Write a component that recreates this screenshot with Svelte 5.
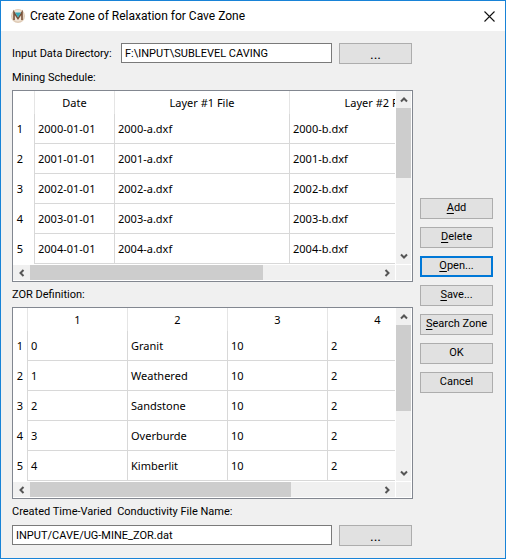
<script>
  let directory = $state('F:\\INPUT\\SUBLEVEL CAVING');
  let outputFile = $state('INPUT/CAVE/UG-MINE_ZOR.dat');

  const tables = [
    {
      label: 'Mining Schedule:',
      kind: 'schedule',
      columns: ['Date', 'Layer #1 File', 'Layer #2 File'],
      rows: [2000, 2001, 2002, 2003, 2004].map((y) => [`${y}-01-01`, `${y}-a.dxf`, `${y}-b.dxf`]),
      thumb: { down: 50, across: 67 },
    },
    {
      label: 'ZOR Definition:',
      kind: 'zor',
      columns: ['1', '2', '3', '4'],
      rows: ['Granit', 'Weathered', 'Sandstone', 'Overburde', 'Kimberlit'].map((name, i) => [String(i), name, '10', '2']),
      thumb: { down: 62, across: 75 },
    },
  ];

  const actions = [
    { key: 'A', rest: 'dd' },
    { key: 'D', rest: 'elete' },
    { key: 'O', rest: 'pen...', focused: true },
    { key: 'S', rest: 'ave...' },
    { key: 'S', rest: 'earch Zone' },
    { key: '', rest: 'OK' },
    { key: '', rest: 'Cancel' },
  ];

  const arrows = {
    up: 'M1 5.5 4 2.5 7 5.5',
    down: 'M1 2.5 4 5.5 7 2.5',
    left: 'M5.5 1 2.5 4 5.5 7',
    right: 'M2.5 1 5.5 4 2.5 7',
  };
</script>

{#snippet arrow(dir)}
  <button class="arrow" type="button" aria-label={`Scroll ${dir}`}>
    <svg viewBox="0 0 8 8" width="8" height="8"><path d={arrows[dir]} fill="none" stroke="#555" stroke-width="2" /></svg>
  </button>
{/snippet}

<main class="window">
  <header class="titlebar">
    <svg class="logo" viewBox="0 0 14 14" width="14" height="14" aria-hidden="true">
      <circle cx="7" cy="7" r="7" fill="#dfcbb6" />
      <circle cx="7" cy="6.6" r="5.8" fill="#efe3d6" />
      <path d="M3 11V3.5L7 9.5 11 3.5V11" fill="none" stroke="#77513a" stroke-width="1.6" />
      <path d="M4 3.6H10L7 8.6Z" fill="#35a9ba" />
    </svg>
    <h1>Create Zone of Relaxation for Cave Zone</h1>
    <button class="close" type="button" aria-label="Close">
      <svg viewBox="0 0 11 11" width="11" height="11"><path d="M.5 .5 10.5 10.5M10.5 .5 .5 10.5" stroke="#111" stroke-width="1.1" /></svg>
    </button>
  </header>

  <div class="content">
    <div class="form">
      <div class="field">
        <label for="directory">Input Data Directory:</label>
        <input id="directory" type="text" bind:value={directory} />
        <button class="push" type="button" aria-label="Browse for directory">...</button>
      </div>

      {#each tables as t}
        <h2 id={t.kind}>{t.label}</h2>
        <div class="frame">
          <div class="viewport">
            <table class={t.kind} aria-labelledby={t.kind}>
              <thead>
                <tr><th class="index"></th>{#each t.columns as c}<th scope="col">{c}</th>{/each}</tr>
              </thead>
              <tbody>
                {#each t.rows as row, i}
                  <tr><th class="index" scope="row">{i + 1}</th>{#each row as cell}<td>{cell}</td>{/each}</tr>
                {/each}
              </tbody>
            </table>
          </div>
          <div class="bar vertical">
            {@render arrow('up')}
            <div class="track"><div class="thumb" style:height="{t.thumb.down}%"></div></div>
            {@render arrow('down')}
          </div>
          <div class="bar horizontal">
            {@render arrow('left')}
            <div class="track"><div class="thumb" style:width="{t.thumb.across}%"></div></div>
            {@render arrow('right')}
          </div>
          <div class="corner"></div>
        </div>
      {/each}

      <label class="caption" for="output">Created Time-Varied&nbsp; Conductivity File Name:</label>
      <div class="field">
        <input id="output" type="text" bind:value={outputFile} />
        <button class="push" type="button" aria-label="Browse for output file">...</button>
      </div>
    </div>

    <div class="actions">
      {#each actions as a}
        <button class="push" class:focused={a.focused} type="button">{#if a.key}<u>{a.key}</u>{/if}{a.rest}</button>
      {/each}
    </div>
  </div>
</main>

<style>
  :global(body) {
    margin: 0;
    background: #f0f0f0;
  }
  * {
    box-sizing: border-box;
  }
  .window {
    min-height: 100vh;
    border: 1px solid #1883d7;
    background: #f0f0f0;
    color: #000;
    font: 11px/14px Roboto, sans-serif;
  }
  button,
  input {
    margin: 0;
    font: inherit;
    color: inherit;
    border-radius: 0;
  }
  .titlebar {
    display: flex;
    align-items: center;
    height: 30px;
    padding: 0 10px;
    background: #fff;
  }
  .logo {
    margin-right: 5px;
  }
  h1 {
    flex: 1;
    margin: 0;
    font: 12px/16px Roboto, sans-serif;
  }
  .close,
  .arrow {
    display: flex;
    align-items: center;
    justify-content: center;
    padding: 0;
    border: 0;
    background: none;
  }
  .content {
    display: flex;
    align-items: center;
    gap: 7px;
    padding: 12px 12px 11px 11px;
  }
  .form {
    flex: 1;
    min-width: 0;
  }
  .field {
    display: flex;
    align-items: flex-start;
    gap: 7px;
    padding: 0 1px 1px 0;
  }
  .field label {
    width: 102px;
    line-height: 21px;
    white-space: nowrap;
  }
  input {
    flex: 1;
    min-width: 0;
    height: 20px;
    padding: 0 3px;
    border: 1px solid #7a7a7a;
    background: #fff;
    outline: 0;
  }
  .push {
    width: 73px;
    height: 21px;
    padding: 0;
    border: 1px solid #adadad;
    background: #e1e1e1;
    white-space: nowrap;
  }
  .field .push {
    font-size: 14px;
  }
  .focused {
    border: 2px solid #0078d7;
  }
  u {
    text-underline-offset: 2px;
  }
  h2,
  .caption {
    display: block;
    margin: 0;
    padding: 6px 0;
    font-size: 11px;
    font-weight: normal;
    line-height: 14px;
  }
  h2 {
    padding-bottom: 5px;
  }
  .frame {
    display: grid;
    grid-template-columns: 1fr 15px;
    grid-template-rows: auto 15px;
    gap: 1px;
    padding: 0 1px 1px 0;
    border: 1px solid #828790;
    background: #fff;
  }
  .viewport {
    overflow: hidden;
  }
  table {
    table-layout: fixed;
    border-collapse: separate;
    border-spacing: 0;
    font: 11px/16px 'Noto Sans', sans-serif;
  }
  .schedule {
    width: 452px;
  }
  .zor {
    width: 415px;
  }
  th,
  td {
    height: 30px;
    padding: 0 3px;
    border: solid #d8d8d8;
    border-width: 0 1px 1px 0;
    font-weight: normal;
    text-align: left;
    white-space: nowrap;
  }
  thead th {
    height: 23px;
    border-color: #e5e5e5;
    border-bottom: 0;
    text-align: center;
  }
  .index {
    border-bottom: 0;
    padding: 0;
    text-align: center;
  }
  .schedule .index {
    width: 22px;
    padding-right: 7px;
  }
  .zor .index {
    width: 15px;
  }
  .schedule th:nth-child(2) {
    width: 80px;
  }
  .bar {
    display: flex;
    background: #f0f0f0;
  }
  .vertical {
    flex-direction: column;
  }
  .arrow {
    flex: none;
    width: 17px;
    height: 15px;
  }
  .vertical .arrow {
    width: 15px;
    height: 17px;
  }
  .track {
    display: flex;
    flex: 1;
  }
  .vertical .track {
    flex-direction: column;
  }
  .thumb {
    background: #cdcdcd;
  }
  .corner {
    background: #f0f0f0;
  }
  .actions {
    display: flex;
    flex-direction: column;
    gap: 8px;
  }
</style>
